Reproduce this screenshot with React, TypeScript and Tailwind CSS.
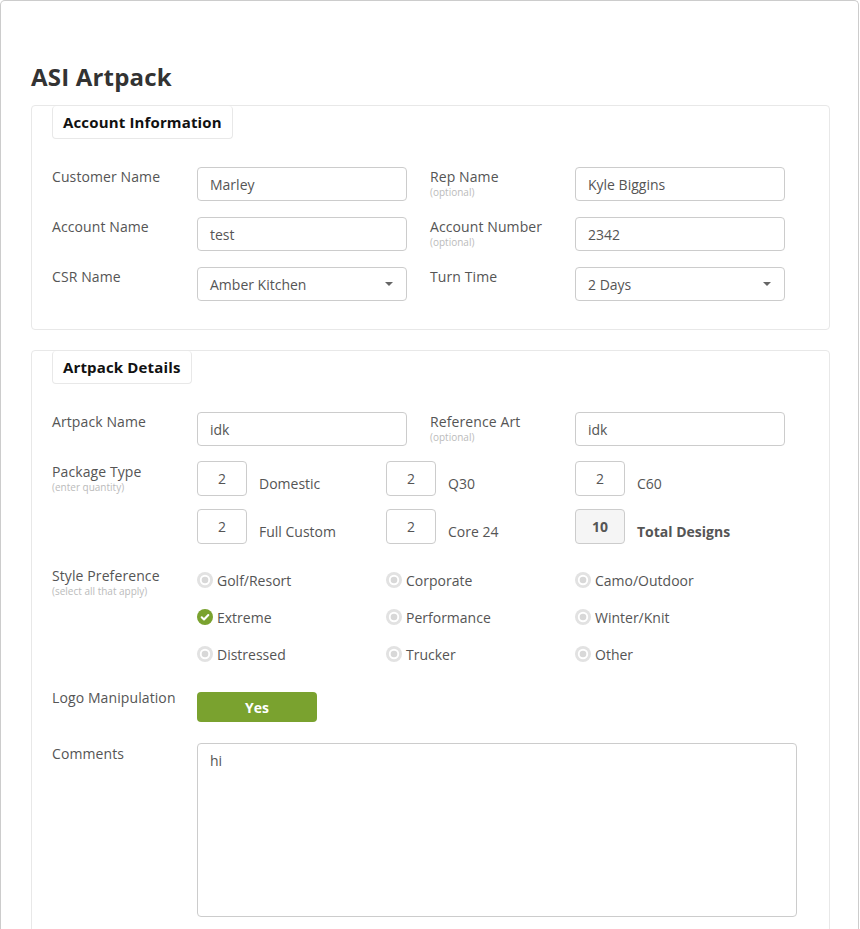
import React from "react";

const font = { fontFamily: '"Open Sans", "DejaVu Sans", sans-serif' };

function Label({ text, sub }: { text: string; sub?: string }) {
  return (
    <div className="w-[145px] shrink-0">
      <div className="text-[14px] leading-[20px] text-[#555] tracking-[0.1px]">{text}</div>
      {sub && <div className="text-[10px] leading-[10px] text-[#bbb]">{sub}</div>}
    </div>
  );
}

function TextBox({ value, select }: { value: string; select?: boolean }) {
  return (
    <div className="w-[210px] h-[34px] border border-[#ccc] rounded-[4px] bg-white flex items-center justify-between pl-[12px] pr-[13px] text-[14px] text-[#555]">
      <span>{value}</span>
      {select && (
        <svg width="8" height="4" viewBox="0 0 8 4">
          <path d="M0 0 H8 L4 4 Z" fill="#666" />
        </svg>
      )}
    </div>
  );
}

function Legend({ text }: { text: string }) {
  return (
    <div className="ml-[20px] inline-flex h-[33px] items-center border border-[#e8e8e8] border-t-0 rounded-[4px] px-[10px] text-[15px] font-bold text-[#111] tracking-[0.15px]">
      {text}
    </div>
  );
}

function Radio({ checked, label }: { checked?: boolean; label: string }) {
  return (
    <div className="flex items-center h-[28px] text-[14px] text-[#555]">
      {checked ? (
        <svg width="16" height="16" viewBox="0 0 16 16" className="mr-[4px]">
          <circle cx="8" cy="8" r="8" fill="#7aa22f" />
          <path d="M4.7 8.3 L7 10.5 L11.3 6" stroke="white" strokeWidth="2.1" fill="none" strokeLinecap="round" strokeLinejoin="round" />
        </svg>
      ) : (
        <svg width="16" height="16" viewBox="0 0 16 16" className="mr-[4px]">
          <circle cx="8" cy="8" r="8" fill="#e2e2e2" />
          <circle cx="8" cy="8" r="5.2" fill="#fff" />
          <circle cx="8" cy="8" r="3.3" fill="#d8d8d8" />
        </svg>
      )}
      <span>{label}</span>
    </div>
  );
}

function Qty({ value, label, total }: { value: string; label: string; total?: boolean }) {
  return (
    <div className="w-[189px] flex">
      <div
        className={`w-[50px] h-[35px] border border-[#ccc] rounded-[4px] flex justify-center pt-[6px] text-[14px] ${
          total ? "bg-[#f5f5f5] font-bold text-[#555]" : "bg-white text-[#555]"
        }`}
      >
        {value}
      </div>
      <div className={`ml-[12px] pt-[12px] text-[14px] text-[#555] ${total ? "font-bold" : ""}`}>{label}</div>
    </div>
  );
}

export default function App() {
  return (
    <div className="bg-white min-h-[929px]" style={font}>
      <div className="w-[859px] min-h-[960px] border border-b-0 border-[#ccc] rounded-t-[5px] pt-[60px] pl-[30px]">
        <h1 className="text-[24px] leading-[32px] font-bold text-[#333] mb-[12px] tracking-[0.2px]">ASI Artpack</h1>

        <div className="w-[799px] border border-[#e8e8e8] rounded-[4px] pb-[28px]">
          <Legend text="Account Information" />
          <div className="mt-[28px] flex flex-col gap-[16px] pl-[20px]">
            <div className="flex">
              <Label text="Customer Name" />
              <TextBox value="Marley" />
              <div className="w-[23px]" />
              <Label text="Rep Name" sub="(optional)" />
              <TextBox value="Kyle Biggins" />
            </div>
            <div className="flex">
              <Label text="Account Name" />
              <TextBox value="test" />
              <div className="w-[23px]" />
              <Label text="Account Number" sub="(optional)" />
              <TextBox value="2342" />
            </div>
            <div className="flex">
              <Label text="CSR Name" />
              <TextBox value="Amber Kitchen" select />
              <div className="w-[23px]" />
              <Label text="Turn Time" />
              <TextBox value="2 Days" select />
            </div>
          </div>
        </div>

        <div className="mt-[20px] w-[799px] min-h-[600px] border border-[#e8e8e8] rounded-[4px] pb-[28px]">
          <Legend text="Artpack Details" />
          <div className="mt-[28px] pl-[20px]">
            <div className="flex">
              <Label text="Artpack Name" />
              <TextBox value="idk" />
              <div className="w-[23px]" />
              <Label text="Reference Art" sub="(optional)" />
              <TextBox value="idk" />
            </div>

            <div className="flex mt-[15px]">
              <div className="pt-[1px]">
                <Label text="Package Type" sub="(enter quantity)" />
              </div>
              <div className="flex flex-col gap-[13px]">
                <div className="flex">
                  <Qty value="2" label="Domestic" />
                  <Qty value="2" label="Q30" />
                  <Qty value="2" label="C60" />
                </div>
                <div className="flex">
                  <Qty value="2" label="Full Custom" />
                  <Qty value="2" label="Core 24" />
                  <Qty value="10" label="Total Designs" total />
                </div>
              </div>
            </div>

            <div className="flex mt-[22px]">
              <div>
                <Label text="Style Preference" sub="(select all that apply)" />
              </div>
              <div className="grid grid-cols-[189px_189px_189px] gap-y-[9px]">
                <Radio label="Golf/Resort" />
                <Radio label="Corporate" />
                <Radio label="Camo/Outdoor" />
                <Radio label="Extreme" checked />
                <Radio label="Performance" />
                <Radio label="Winter/Knit" />
                <Radio label="Distressed" />
                <Radio label="Trucker" />
                <Radio label="Other" />
              </div>
            </div>

            <div className="flex mt-[24px]">
              <div className="-mt-[4px]">
                <Label text="Logo Manipulation" />
              </div>
              <div className="w-[120px] h-[30px] rounded-[4px] bg-[#7aa22f] text-white font-bold text-[14px] flex items-center justify-center">
                Yes
              </div>
            </div>

            <div className="flex mt-[21px]">
              <div className="pt-[1px]">
                <Label text="Comments" />
              </div>
              <div className="w-[600px] h-[174px] border border-[#ccc] rounded-[4px] px-[12px] pt-[6px] text-[14px] text-[#555]">
                hi
              </div>
            </div>
          </div>
        </div>
      </div>
    </div>
  );
}
